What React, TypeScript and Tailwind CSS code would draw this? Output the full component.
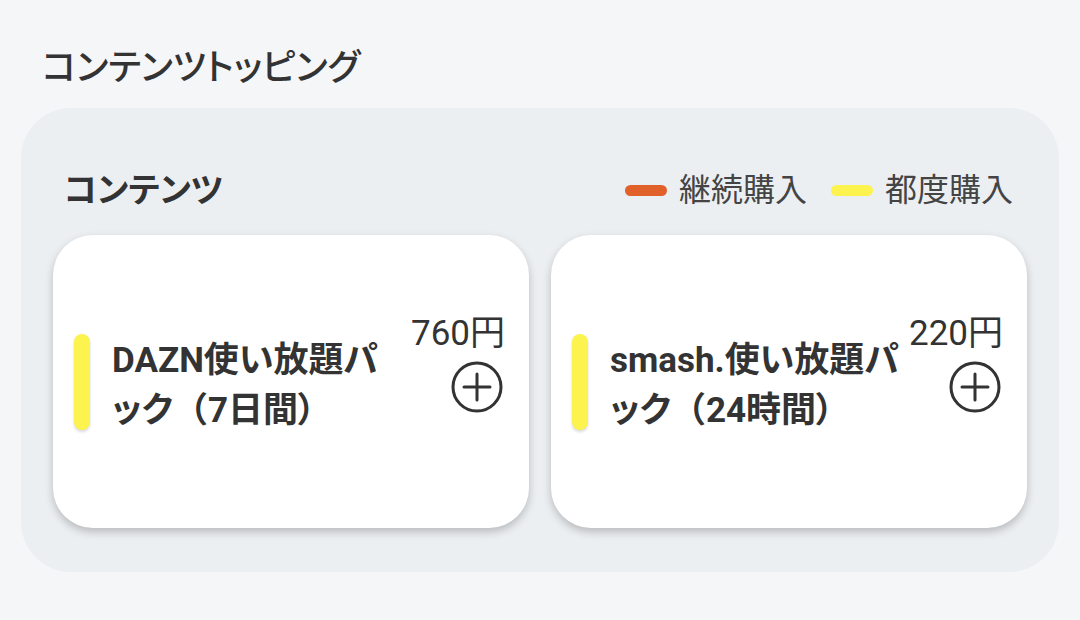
import React from "react";

const font = "font-['Roboto','Noto_Sans_CJK_JP',sans-serif]";

function PlusCircle() {
  return (
    <svg width="52" height="52" viewBox="0 0 52 52" fill="none" stroke="#333" strokeWidth="3" strokeLinecap="round">
      <circle cx="26" cy="26" r="24" />
      <path d="M13 26h26M26 13v26" />
    </svg>
  );
}

function Card({ name, rest, price }: { name: string; rest: string; price: string }) {
  return (
    <div className="h-[293px] rounded-[40px] bg-white shadow-[0_4px_8px_rgba(0,0,0,0.22)] flex items-center pl-[21px] pr-[24px]">
      <div className="w-[16px] h-[96px] rounded-full bg-[#fcf34e] shadow-[0_2px_3px_rgba(0,0,0,0.15)] shrink-0" />
      <div className="ml-[22px] mr-[6px] flex-1 min-w-0 text-[35px] leading-[50px] font-bold text-[#333] [font-feature-settings:'palt'] pt-[8px]">
        {name}
        <span className="[font-feature-settings:normal]">（</span>
        {rest}
        <span>）</span>
      </div>
      <div className="flex flex-col items-end shrink-0 -mt-[36px]">
        <div className="text-[35px] leading-[40px] font-normal text-[#333]">{price}</div>
        <div className="mt-[7px] mr-[2px]">
          <PlusCircle />
        </div>
      </div>
    </div>
  );
}

export default function App() {
  return (
    <div className={`w-[1080px] h-[620px] bg-[#f5f6f8] px-[21px] pt-[40px] ${font}`}>
      <h1 className="pl-[21px] text-[36px] leading-[56px] font-medium text-[#333] [font-feature-settings:'palt']">
        コンテンツトッピング
      </h1>
      <div className="mt-[12px] h-[464px] rounded-[50px] bg-[#eceff2] px-[32px] pt-[62px]">
        <div className="h-[40px] flex items-center justify-between pl-[11px] pr-[14px]">
          <div className="text-[34px] font-bold text-[#333] [font-feature-settings:'palt']">コンテンツ</div>
          <div className="flex items-center text-[32px] text-[#444]">
            <span className="w-[42px] h-[11px] rounded-full bg-[#e0612a]" />
            <span className="ml-[12px]">継続購入</span>
            <span className="ml-[24px] w-[42px] h-[11px] rounded-full bg-[#fcf34e]" />
            <span className="ml-[12px]">都度購入</span>
          </div>
        </div>
        <div className="mt-[25px] grid grid-cols-2 gap-[22px]">
          <Card name="DAZN使い放題パック" rest="7日間" price="760円" />
          <Card name="smash.使い放題パック" rest="24時間" price="220円" />
        </div>
      </div>
    </div>
  );
}
